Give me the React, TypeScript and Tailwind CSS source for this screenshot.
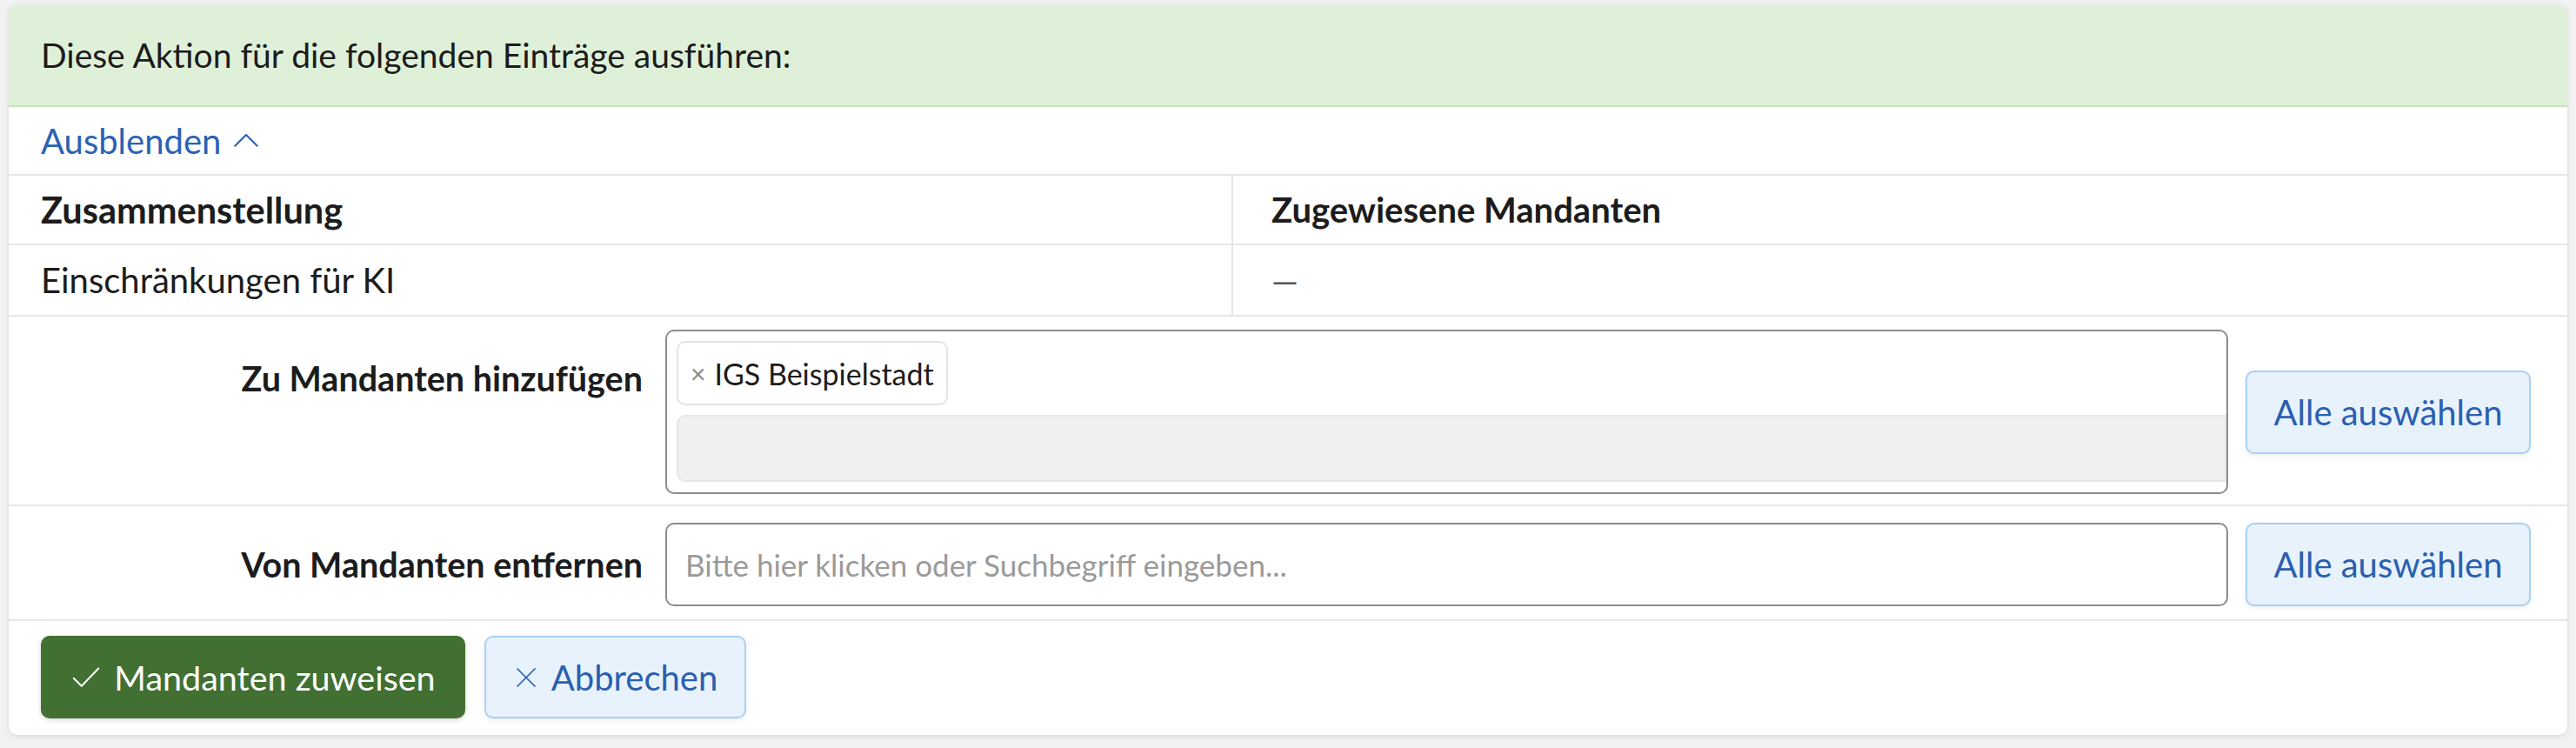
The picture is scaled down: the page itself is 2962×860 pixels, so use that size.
import React from "react";

const font = { fontFamily: "Lato, 'Noto Sans', sans-serif" };

const Check = () => (
  <svg width="36" height="36" viewBox="0 0 24 24" fill="none" stroke="currentColor" strokeWidth="1.3" strokeLinecap="round" strokeLinejoin="round">
    <path d="M2.5 12.5l6 6L21.5 5" />
  </svg>
);

const Cross = () => (
  <svg width="30" height="30" viewBox="0 0 24 24" fill="none" stroke="currentColor" strokeWidth="1.4" strokeLinecap="round">
    <path d="M4 4l16 16M20 4L4 20" />
  </svg>
);

const ChevronUp = () => (
  <svg width="34" height="34" viewBox="0 0 24 24" fill="none" stroke="currentColor" strokeWidth="1.5" strokeLinecap="round" strokeLinejoin="round">
    <path d="M3 16l9-9 9 9" />
  </svg>
);

const SelectAllButton: React.FC = () => (
  <button
    type="button"
    className="ml-[20px] mr-[42px] flex h-[96px] w-[328px] shrink-0 items-center justify-center rounded-[10px] border-2 border-[#a9d0f6] bg-[#e8f2fd] text-[40px] text-[#2a5fb0] shadow-[0_2px_6px_rgba(0,0,0,0.08)]"
  >
    Alle auswählen
  </button>
);

export default function App() {
  return (
    <div className="min-h-[860px] bg-[#f2f2f2] pt-[6px] pb-[17px] px-[10px] text-[#1c1c1c]" style={font}>
      <div className="overflow-hidden rounded-[10px] bg-white text-[39px] shadow-[0_1px_6px_rgba(0,0,0,0.12)]">
        <div className="flex h-[117px] items-center border-b-2 border-[#c6e6bc] bg-[#dff0d8] px-[37px]">
          Diese Aktion für die folgenden Einträge ausführen:
        </div>

        <div className="flex h-[79px] items-center border-b-2 border-[#e6e6e6] px-[37px]">
          <button type="button" className="flex items-center gap-[12px] text-[40px] text-[#2a62b5]">
            Ausblenden
            <ChevronUp />
          </button>
        </div>

        <table className="w-full border-collapse">
          <tbody>
            <tr className="h-[79px] border-b-2 border-[#e6e6e6]">
              <th className="w-[1407px] border-r-2 border-[#e6e6e6] px-[37px] text-left text-[41.5px] font-bold">Zusammenstellung</th>
              <th className="px-[44px] text-left text-[40px] font-bold">Zugewiesene Mandanten</th>
            </tr>
            <tr className="h-[82px] border-b-2 border-[#e6e6e6]">
              <td className="border-r-2 border-[#e6e6e6] px-[37px] text-[40px]">Einschränkungen für KI</td>
              <td className="px-[44px] text-[#555]">—</td>
            </tr>
          </tbody>
        </table>

        <div className="flex items-center border-b-2 border-[#e6e6e6] pt-[15px] pb-[12px]">
          <div className="w-[755px] shrink-0 self-start pt-[26px] pr-[26px] text-right text-[39.5px] font-bold">
            Zu Mandanten hinzufügen
          </div>
          <div className="flex h-[189px] flex-1 flex-col overflow-hidden rounded-[10px] border-2 border-[#8c8c8c] pt-[11px] pl-[11px] pb-[10px]">
            <div className="flex">
              <span className="flex h-[74px] items-center gap-[10px] rounded-[10px] border-2 border-[#e4e4e4] px-[14px] text-[34px]">
                <span className="text-[30px] text-[#8a8a8a]">×</span>
                IGS Beispielstadt
              </span>
            </div>
            <div className="mt-[11px] h-[77px] rounded-l-[10px] border-2 border-[#e6e6e6] bg-[#f0f0f0]" />
          </div>
          <SelectAllButton />
        </div>

        <div className="flex items-center border-b-2 border-[#e6e6e6] pt-[19px] pb-[15px]">
          <div className="w-[755px] shrink-0 pr-[26px] text-right text-[39.5px] font-bold">Von Mandanten entfernen</div>
          <div className="flex h-[96px] flex-1 items-center rounded-[10px] border-2 border-[#8c8c8c] px-[21px] text-[35px] text-[#9a9a9a]">
            Bitte hier klicken oder Suchbegriff eingeben...
          </div>
          <SelectAllButton />
        </div>

        <div className="flex items-center gap-[22px] px-[37px] pt-[17px] pb-[19px]">
          <button
            type="button"
            className="flex h-[95px] w-[488px] items-center justify-center gap-[14px] rounded-[10px] bg-[#417032] text-[39.5px] text-white shadow-[0_2px_6px_rgba(0,0,0,0.15)]"
          >
            <Check />
            Mandanten zuweisen
          </button>
          <button
            type="button"
            className="flex h-[95px] w-[301px] items-center justify-center gap-[14px] rounded-[10px] border-2 border-[#a9d0f6] bg-[#e8f2fd] text-[40px] text-[#2a5fb0] shadow-[0_2px_6px_rgba(0,0,0,0.08)]"
          >
            <Cross />
            Abbrechen
          </button>
        </div>
      </div>
    </div>
  );
}
